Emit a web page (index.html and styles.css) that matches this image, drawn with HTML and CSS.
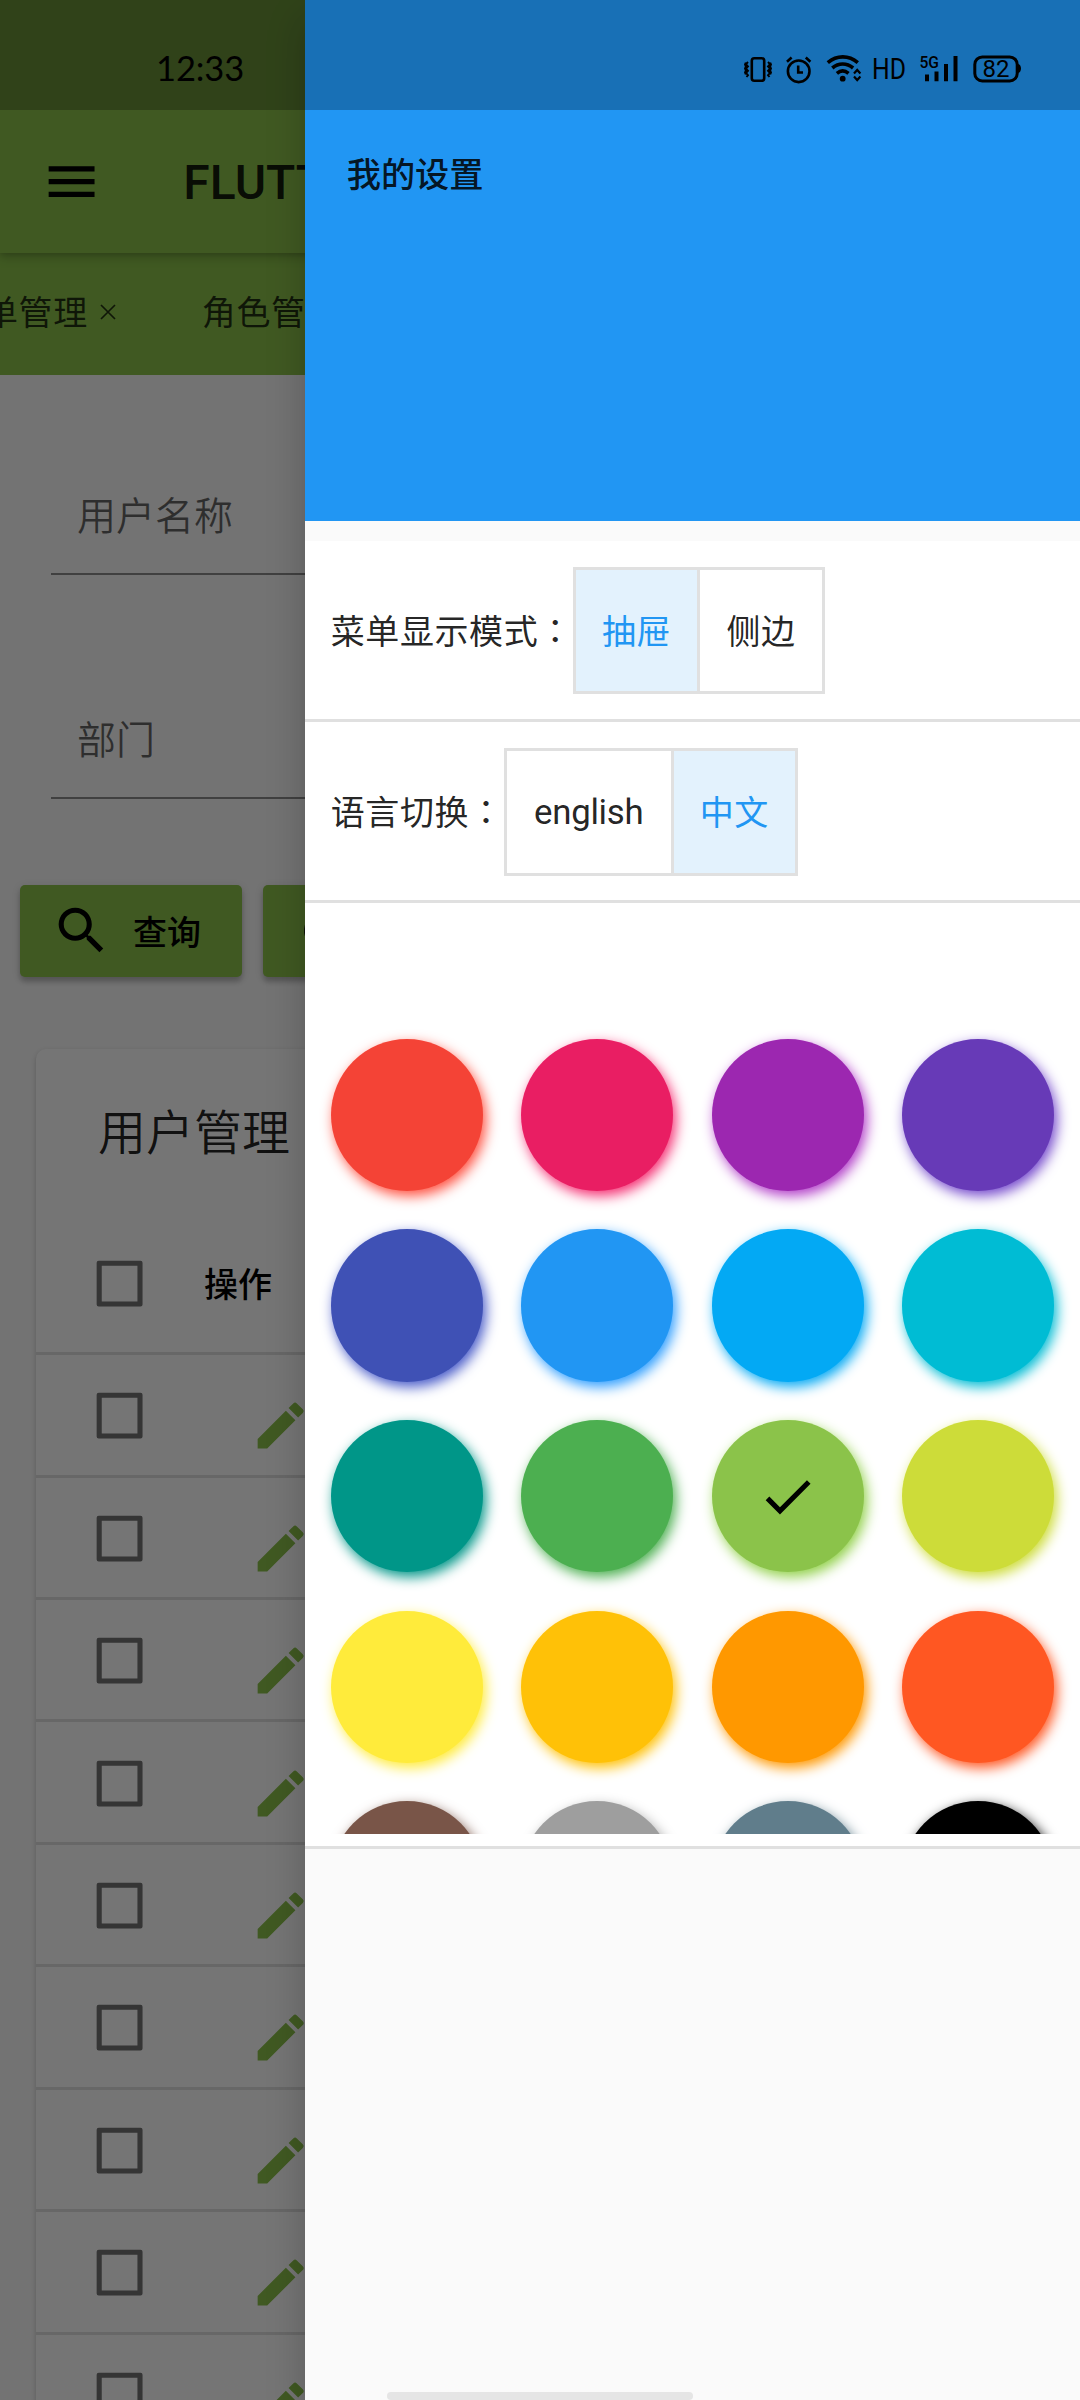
FILE: index.html
```html
<!DOCTYPE html>
<html lang="zh-CN">
<head>
<meta charset="utf-8">
<title>我的设置</title>
<link rel="stylesheet" href="styles.css">
</head>
<body>
<svg class="defs" width="0" height="0">
  <symbol id="i-edit" viewBox="0 0 24 24"><path d="M3 17.25V21h3.75L17.81 9.94l-3.75-3.75L3 17.25zM20.71 7.04a1 1 0 0 0 0-1.41l-2.34-2.34a1 1 0 0 0-1.41 0l-1.83 1.83 3.75 3.75 1.83-1.83z"/></symbol>
  <symbol id="i-box" viewBox="0 0 24 24"><path fill-rule="evenodd" d="M3.8 3h16.4a.8.8 0 0 1 .8.8v16.4a.8.8 0 0 1-.8.8H3.8a.8.8 0 0 1-.8-.8V3.8a.8.8 0 0 1 .8-.8zM5 5v14h14V5z"/></symbol>
</svg>
<div class="screen">
  <main class="page">
    <header class="appbar">
      <svg class="icon" viewBox="0 0 24 24"><path d="M3 18h18v-2H3v2zm0-5h18v-2H3v2zm0-7v2h18V6H3z"/></svg>
      <h1 class="appbar-title">FLUTTER</h1>
    </header>
    <nav class="tabs">
      <div class="tab"><span>单管理</span><svg class="close" viewBox="0 0 16 16"><path d="M1 1l14 14M15 1L1 15"/></svg></div>
      <div class="tab"><span>角色管</span></div>
    </nav>
    <section class="form">
      <div class="field">用户名称</div>
      <div class="field">部门</div>
    </section>
    <div class="actions">
      <button class="btn"><svg class="icon" viewBox="0 0 24 24"><path d="M15.5 14h-.79l-.28-.27A6.47 6.47 0 0 0 16 9.5 6.5 6.5 0 1 0 9.5 16c1.61 0 3.09-.59 4.23-1.57l.27.28v.79l5 4.99L20.49 19l-4.99-5zm-6 0a4.5 4.5 0 1 1 0-9 4.5 4.5 0 0 1 0 9z"/></svg>查询</button>
      <button class="btn"><svg class="icon" viewBox="0 0 24 24"><path d="M17.65 6.35A7.96 7.96 0 0 0 12 4a8 8 0 1 0 7.73 10h-2.08A6 6 0 1 1 12 6c1.66 0 3.14.69 4.22 1.78L13 11h7V4l-2.35 2.35z"/></svg></button>
    </div>
    <section class="card">
      <h2 class="card-title">用户管理</h2>
      <div class="row head"><svg class="icon check"><use href="#i-box"/></svg><span>操作</span></div>
      <div class="row"><svg class="icon check"><use href="#i-box"/></svg><svg class="icon edit"><use href="#i-edit"/></svg></div>
      <div class="row"><svg class="icon check"><use href="#i-box"/></svg><svg class="icon edit"><use href="#i-edit"/></svg></div>
      <div class="row"><svg class="icon check"><use href="#i-box"/></svg><svg class="icon edit"><use href="#i-edit"/></svg></div>
      <div class="row"><svg class="icon check"><use href="#i-box"/></svg><svg class="icon edit"><use href="#i-edit"/></svg></div>
      <div class="row"><svg class="icon check"><use href="#i-box"/></svg><svg class="icon edit"><use href="#i-edit"/></svg></div>
      <div class="row"><svg class="icon check"><use href="#i-box"/></svg><svg class="icon edit"><use href="#i-edit"/></svg></div>
      <div class="row"><svg class="icon check"><use href="#i-box"/></svg><svg class="icon edit"><use href="#i-edit"/></svg></div>
      <div class="row"><svg class="icon check"><use href="#i-box"/></svg><svg class="icon edit"><use href="#i-edit"/></svg></div>
      <div class="row"><svg class="icon check"><use href="#i-box"/></svg><svg class="icon edit"><use href="#i-edit"/></svg></div>
    </section>
  </main>
  <div class="scrim"></div>
  <aside class="drawer">
    <div class="drawer-header">我的设置</div>
    <div class="setting">
      <span class="label">菜单显示模式<span class="colon" lang="zh-TW">：</span></span>
      <div class="toggle"><span class="opt on">抽屉</span><span class="opt">侧边</span></div>
    </div>
    <div class="setting">
      <span class="label">语言切换<span class="colon" lang="zh-TW">：</span></span>
      <div class="toggle"><span class="opt en">english</span><span class="opt on">中文</span></div>
    </div>
    <div class="palette">
      <div class="swatches">
        <i class="sw red"></i><i class="sw pink"></i><i class="sw purple"></i><i class="sw deep-purple"></i>
        <i class="sw indigo"></i><i class="sw blue"></i><i class="sw light-blue"></i><i class="sw cyan"></i>
        <i class="sw teal"></i><i class="sw green"></i><i class="sw light-green"><svg class="icon" viewBox="0 0 24 24"><path d="M9 16.17L4.83 12l-1.42 1.41L9 19 21 7l-1.41-1.41z"/></svg></i><i class="sw lime"></i>
        <i class="sw yellow"></i><i class="sw amber"></i><i class="sw orange"></i><i class="sw deep-orange"></i>
        <i class="sw brown"></i><i class="sw grey"></i><i class="sw blue-grey"></i><i class="sw black"></i>
      </div>
    </div>
  </aside>
  <div class="statusbar">
    <span class="clock">12:33</span>
    <svg class="status-icons" viewBox="0 0 290 40" width="290" height="40">
      <g fill="none" stroke="#000" stroke-width="2.600">
        <rect x="8.800" y="9.300" width="12.400" height="22.400" rx="2.500"/>
        <path stroke-width="1.900" d="M5 13l-2 2.200 2 2.200-2 2.200 2 2.200-2 2.200 2 2.200-1.500 1.800M2.800 13.500l-.8 2 .8 2-.8 2 .8 2-.8 2 .8 2M25 13l2 2.200-2 2.200 2 2.200-2 2.200 2 2.200-2 2.200 1.500 1.800M27.200 13.500l.8 2-.8 2 .8 2-.8 2 .8 2-.8 2"/>
        <circle cx="55.700" cy="22.300" r="10.800"/>
        <path d="M55.200 16.500v7h4.800M44 12.700l4.600-4.200M67.400 12.700l-4.600-4.200"/>
        <path stroke-width="3.600" d="M84.800 13.600c9-7.600 21-7.600 30 0M89.300 19c6.300-5.300 14.500-5.300 20.800 0M93.900 24.300c3.600-3 8-3 11.600 0"/>
        <path stroke-width="2.200" d="M111 24.500l3.200-3.500 3.200 3.500M111 27.500l3.200 3.500 3.200-3.500"/>
        <rect x="231.800" y="7.900" width="42.400" height="24" rx="7.500" stroke-width="3"/>
      </g>
      <circle cx="99.700" cy="29.700" r="2.900"/>
      <path d="M275 15c4 .5 4 8.500 0 9z"/>
      <path d="M182 25.500h4v6.800h-4zM191.500 22.500h4v9.800h-4zM201 15h4v17.300h-4zM210.500 7h4v25.300h-4z"/>
      <text class="t-hd" x="129" y="30" textLength="34" lengthAdjust="spacingAndGlyphs">HD</text>
      <text class="t-5g" x="176.500" y="18.800" textLength="19.500" lengthAdjust="spacingAndGlyphs">5G</text>
      <text class="t-bat" x="239.500" y="28" textLength="27" lengthAdjust="spacingAndGlyphs">82</text>
    </svg>
  </div>
  <div class="home-indicator"></div>
</div>
</body>
</html>
```
FILE: styles.css
```css
* { box-sizing: border-box; }

body {
  margin: 0;
  font-family: Roboto, "Noto Sans CJK SC", sans-serif;
  font-size: 34px;
  color: rgba(0, 0, 0, .87);
}

.defs { position: absolute; }

.screen {
  position: relative;
  width: 1080px;
  height: 2400px;
  overflow: hidden;
  background: #fafafa;
}

.page { width: 1080px; }

.icon {
  width: 61.2px;
  height: 61.2px;
  flex: none;
  fill: #000;
}

.appbar {
  position: relative;
  z-index: 1;
  display: flex;
  align-items: center;
  height: 253px;
  padding: 110px 0 0 40.6px;
  gap: 81.500px;
  background: #8bc34a;
  box-shadow: 0 5px 10px rgba(0, 0, 0, .18), 0 2px 4px rgba(0, 0, 0, .1);
}

.appbar-title {
  margin: 0;
  padding-top: 2px;
  font-size: 48px;
  font-weight: 500;
}

.tabs {
  display: flex;
  align-items: center;
  height: 122px;
  padding-bottom: 8px;
  background: #8bc34a;
}

.tab {
  display: flex;
  align-items: center;
  flex: none;
  gap: 12px;
  margin-left: -16px;
  letter-spacing: .6px;
  color: rgba(0, 0, 0, .75);
}

.tab + .tab { margin-left: 86px; }

.close {
  width: 16px;
  height: 16px;
  margin-top: 4px;
  fill: none;
  stroke: rgba(0, 0, 0, .75);
  stroke-width: 1.700;
}

.form { padding: 76px 51px 0; }

.field {
  height: 123.800px;
  margin-bottom: 100px;
  padding: 37px 26px 0;
  border-bottom: 2.500px solid rgba(0, 0, 0, .44);
  font-size: 39px;
  font-weight: 350;
  line-height: 59px;
  color: rgba(0, 0, 0, .6);
}

.actions {
  display: flex;
  gap: 21px;
  margin-top: -14px;
  padding-left: 20.300px;
}

.btn {
  display: flex;
  align-items: center;
  gap: 21px;
  width: 221.700px;
  height: 92px;
  padding: 0 0 0 30.600px;
  border: 0;
  border-radius: 5px;
  background: #8bc34a;
  box-shadow: 0 5px 5px rgba(0, 0, 0, .18), 0 2px 8px rgba(0, 0, 0, .14);
  font: 500 34px Roboto, "Noto Sans CJK SC", sans-serif;
  color: #000;
}

.card {
  margin: 72.500px 36px 0;
  border-radius: 10px;
  background: #fff;
  box-shadow: 0 2px 5px rgba(0, 0, 0, .2);
}

.card-title {
  height: 163.500px;
  margin: 0;
  padding-left: 62px;
  font-size: 48px;
  font-weight: 350;
  line-height: 169px;
}

.row {
  display: flex;
  align-items: center;
  height: 122.450px;
  padding-left: 52.800px;
  border-bottom: 3px solid #e0e0e0;
}

.row.head {
  height: 142.500px;
  font-weight: 500;
  color: #000;
}

.row.head span { margin-left: 54px; }

.row .check {
  margin-top: 2px;
  fill: #737373;
}

.edit {
  margin: 22px 0 0 100px;
  fill: #8bc34a;
}

.scrim {
  position: absolute;
  inset: 0;
  z-index: 2;
  background: rgba(0, 0, 0, .54);
}

.drawer {
  position: absolute;
  z-index: 3;
  top: 0;
  right: 0;
  width: 775.300px;
  height: 2400px;
  background: #fafafa;
  box-shadow: 0 20px 36px rgba(0, 0, 0, .22);
}

.drawer-header {
  height: 520.500px;
  margin-bottom: 20.500px;
  padding: 150px 0 0 42px;
  background: #2196f3;
  font-size: 34.200px;
  font-weight: 500;
  line-height: 50px;
}

.setting {
  display: flex;
  align-items: center;
  height: 181.200px;
  padding-left: 26px;
  border-bottom: 3px solid #e0e0e0;
  background: #fff;
  font-size: 34px;
  letter-spacing: .6px;
}

.label { padding-bottom: 2px; }
.colon { font-family: "Noto Sans CJK TC", sans-serif; line-height: 1; }

.toggle {
  display: flex;
  height: 127.500px;
  margin-top: 1px;
  border: 3px solid #e0e0e0;
}

.opt {
  display: flex;
  align-items: center;
  padding: 0 26.100px 3px;
  background: #fff;
}

.opt + .opt { border-left: 3px solid #e0e0e0; }

.opt.on {
  background: #e3f2fd;
  color: #2196f3;
}

.opt.en {
  padding: 0 27.400px;
  font-size: 34.800px;
  letter-spacing: -.3px;
}

.palette {
  height: 945.500px;
  border-bottom: 3px solid #e0e0e0;
  background: #fff;
}

.swatches {
  display: grid;
  grid-template-columns: repeat(4, 152.300px);
  grid-auto-rows: 152.300px;
  gap: 38.400px 38.200px;
  height: 931px;
  padding: 135.300px 0 0 26px;
  overflow: hidden;
}

.sw {
  display: flex;
  align-items: center;
  justify-content: center;
  border-radius: 50%;
  background: var(--c);
  box-shadow: 3px 5px 13px var(--s, var(--c));
}

.red { --c: #f44336; --s: #ff5040; }
.pink { --c: #e91e63; --s: #f52e72; }
.purple { --c: #9c27b0; --s: #b13cc8; }
.deep-purple { --c: #673ab7; --s: #7448cc; }
.indigo { --c: #3f51b5; --s: #4659c8; }
.blue { --c: #2196f3; --s: #2c9dff; }
.light-blue { --c: #03a9f4; }
.cyan { --c: #00bcd4; }
.teal { --c: #009688; }
.green { --c: #4caf50; }
.light-green { --c: #8bc34a; --s: #90d048; }
.lime { --c: #cddc39; }
.yellow { --c: #ffeb3b; }
.amber { --c: #ffc107; }
.orange { --c: #ff9800; }
.deep-orange { --c: #ff5722; }
.brown { --c: #795548; }
.grey { --c: #9e9e9e; }
.blue-grey { --c: #607d8b; }
.black { --c: #000; }

.statusbar {
  position: absolute;
  z-index: 4;
  top: 0;
  left: 0;
  display: flex;
  align-items: center;
  justify-content: space-between;
  width: 1080px;
  height: 110px;
  padding: 28px 47px 0 156px;
  background: rgba(0, 0, 0, .25);
}

.clock {
  padding-bottom: 3px;
  font-family: Lato, sans-serif;
  font-size: 34.500px;
  letter-spacing: -.1px;
  color: #000;
}

.status-icons { font-family: Roboto, sans-serif; }
.t-hd { font-size: 29px; }
.t-5g { font-size: 17px; font-weight: 500; }
.t-bat { font-size: 23px; }

.home-indicator {
  position: absolute;
  z-index: 5;
  left: 387px;
  bottom: 0;
  width: 306px;
  height: 8.500px;
  border-radius: 5px;
  background: #e5e5e5;
}
```
